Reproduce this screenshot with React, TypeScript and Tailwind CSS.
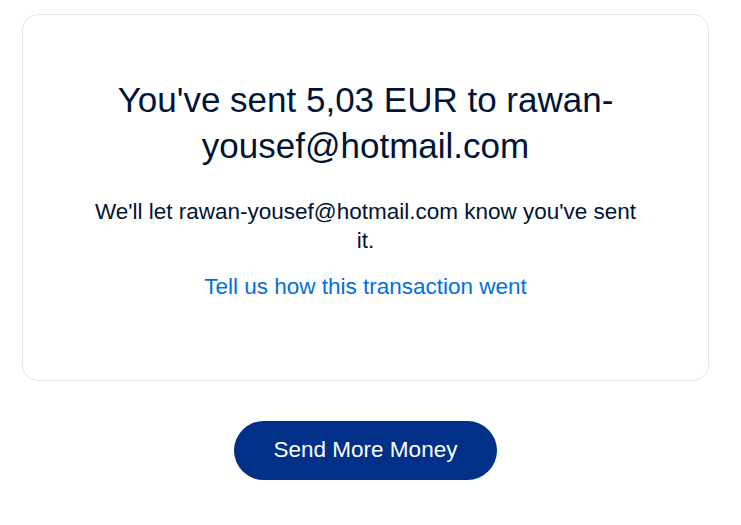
import React from "react";

export default function App() {
  return (
    <div className="min-h-[525px] bg-white pt-[14px] font-['Liberation_Sans',Arial,sans-serif]">
      <div className="ml-[22px] w-[687px] rounded-[16px] border border-[#e6e6e6] bg-white px-[40px] pt-[62px] pb-[79px] text-center">
        <h1 className="mx-auto text-[35px] leading-[1.3] text-[#001435]">
          You've sent 5,03 EUR to rawan-yousef@hotmail.com
        </h1>
        <p className="mx-auto mt-[29px] w-[550px] text-[22.5px] leading-[1.3] text-[#001435]">
          We'll let rawan-yousef@hotmail.com know you've sent it.
        </p>
        <p className="mt-[16px] text-[22.5px] leading-[1.3] text-[#0070e0]">
          Tell us how this transaction went
        </p>
      </div>
      <div className="ml-[22px] flex w-[687px] justify-center pt-[40px]">
        <button className="h-[59px] w-[263px] rounded-full bg-[#003087] text-[22.5px] text-white">
          Send More Money
        </button>
      </div>
    </div>
  );
}
